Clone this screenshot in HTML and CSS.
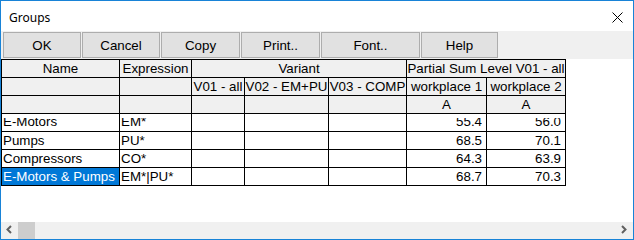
FILE: index.html
```html
<!DOCTYPE html>
<html>
	<head>
		<meta charset="utf-8">
		<title>Groups</title>
		<link rel="stylesheet" href="styles.css">
	</head>
	<body>
		<div class="window">
			<div class="titlebar">
				<span class="title">Groups</span>
				<svg class="close" width="11" height="11" viewBox="0 0 11 11">
					<path d="M0.5 0.5 L10.5 10.5 M10.5 0.5 L0.5 10.5" stroke="#000" stroke-width="1" fill="none"/>
				</svg>
			</div>

			<div class="toolbar">
				<button class="btn b-ok">OK</button>
				<button class="btn b-cancel">Cancel</button>
				<button class="btn b-copy">Copy</button>
				<button class="btn b-print">Print..</button>
				<button class="btn b-font">Font..</button>
				<button class="btn b-help">Help</button>
			</div>

			<div class="content">
				<table class="grid">
					<colgroup>
						<col class="c-name">
						<col class="c-expr">
						<col class="c-v01">
						<col class="c-v02">
						<col class="c-v03">
						<col class="c-w1">
						<col class="c-w2">
					</colgroup>
					<tr class="head">
						<td>Name</td>
						<td>Expression</td>
						<td colspan="3">Variant</td>
						<td colspan="2">Partial Sum Level V01 - all</td>
					</tr>
					<tr class="head">
						<td></td>
						<td></td>
						<td>V01 - all</td>
						<td>V02 - EM+PU</td>
						<td>V03 - COMP</td>
						<td>workplace 1</td>
						<td>workplace 2</td>
					</tr>
					<tr class="head">
						<td></td>
						<td></td>
						<td></td>
						<td></td>
						<td></td>
						<td>A</td>
						<td>A</td>
					</tr>
					<!-- first data row is drawn with its top cut off, as in the grid control -->
					<tr class="row clipped">
						<td class="txt"><div class="in"><div class="t">E-Motors</div></div></td>
						<td class="txt"><div class="in"><div class="t">EM*</div></div></td>
						<td></td>
						<td></td>
						<td></td>
						<td class="num"><div class="in"><div class="t">55.4</div></div></td>
						<td class="num"><div class="in"><div class="t">56.0</div></div></td>
					</tr>
					<tr class="row">
						<td class="txt">Pumps</td>
						<td class="txt">PU*</td>
						<td></td>
						<td></td>
						<td></td>
						<td class="num">68.5</td>
						<td class="num">70.1</td>
					</tr>
					<tr class="row">
						<td class="txt">Compressors</td>
						<td class="txt">CO*</td>
						<td></td>
						<td></td>
						<td></td>
						<td class="num">64.3</td>
						<td class="num">63.9</td>
					</tr>
					<tr class="row">
						<td class="txt selected">E-Motors &amp; Pumps</td>
						<td class="txt">EM*|PU*</td>
						<td></td>
						<td></td>
						<td></td>
						<td class="num">68.7</td>
						<td class="num">70.3</td>
					</tr>
				</table>
			</div>

			<div class="hscroll">
				<span class="arrow">
					<svg width="17" height="17" viewBox="0 0 17 17">
						<path d="M10 4 L6.5 7.5 L10 11" stroke="#606060" stroke-width="2" fill="none"/>
					</svg>
				</span>
				<span class="thumb"></span>
				<span class="track"></span>
				<span class="arrow">
					<svg width="17" height="17" viewBox="0 0 17 17">
						<path d="M6 4 L9.5 7.5 L6 11" stroke="#606060" stroke-width="2" fill="none"/>
					</svg>
				</span>
			</div>
		</div>
	</body>
</html>
```

FILE: styles.css
```css
* {
	margin: 0;
	padding: 0;
	box-sizing: border-box;
}

body {
	background-color: #fff;
	font-family: "Liberation Sans", Arial, sans-serif;
	font-size: 10pt;
	color: #000;
}

.window {
	width: 634px;
	height: 240px;
	border: 1px solid #1883d7;
	display: flex;
	flex-direction: column;
	background-color: #fff;
}

.titlebar {
	height: 30px;
	display: flex;
	align-items: center;
	padding: 2px 0 0 8px;
}

.title {
	flex-grow: 1;
	font-family: "Segoe UI", "Noto Sans", sans-serif;
	font-size: 12px;
}

.close {
	margin-right: 10px;
}

.toolbar {
	height: 28px;
	background-color: #f0f0f0;
	display: flex;
	gap: 1px;
	padding: 1px 0 1px 2px;
}

.btn {
	height: 26px;
	background-color: #e1e1e1;
	border: 1px solid #adadad;
	font-family: "Liberation Sans", Arial, sans-serif;
	font-size: 10pt;
	color: #000;
}

.b-ok { width: 78px; }
.b-cancel { width: 78px; }
.b-copy { width: 79px; }
.b-print { width: 79px; }
.b-font { width: 99px; }
.b-help { width: 77px; }

.content {
	flex-grow: 1;
}

.grid {
	table-layout: fixed;
	border-collapse: separate;
	border-spacing: 0;
	width: 565px;
	border-top: 1px solid #000;
	border-left: 1px solid #000;
}

.c-name { width: 118px; }
.c-expr { width: 72px; }
.c-v01 { width: 53px; }
.c-v02 { width: 84px; }
.c-v03 { width: 78px; }
.c-w1 { width: 80px; }
.c-w2 { width: 79px; }

.grid td {
	box-sizing: content-box;
	height: 17px;
	line-height: 17px;
	padding: 0;
	border-right: 1px solid #000;
	border-bottom: 1px solid #000;
	white-space: nowrap;
	overflow: hidden;
	vertical-align: top;
}

.head td {
	background-color: #f0f0f0;
	text-align: center;
}

.row td {
	background-color: #fff;
}

.grid td.txt {
	padding-left: 1px;
}

.grid td.num {
	text-align: right;
	padding-right: 4px;
}

.grid td.selected {
	background-color: #0078d7;
	color: #fff;
}

.clipped .in {
	margin-top: 4px;
	height: 13px;
	overflow: hidden;
}

.clipped .t {
	margin-top: -5px;
	line-height: 17px;
}

.hscroll {
	height: 17px;
	display: flex;
	background-color: #f0f0f0;
}

.arrow {
	width: 17px;
	height: 17px;
}

.thumb {
	width: 17px;
	background-color: #cdcdcd;
}

.track {
	flex-grow: 1;
}
```
